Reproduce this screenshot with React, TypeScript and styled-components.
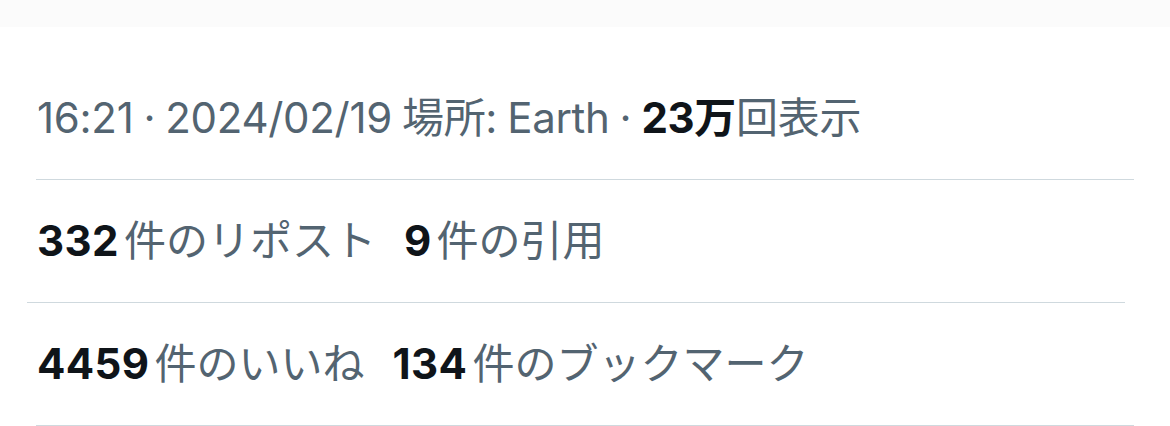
import React from 'react'
import styled, { createGlobalStyle } from 'styled-components'

const GlobalStyle = createGlobalStyle`
  body {
    margin: 0;
    background: #ffffff;
    font-family: Inter, "Noto Sans CJK JP", sans-serif;
  }
`

const Page = styled.div`
  width: 1170px;
  height: 426px;
  overflow: hidden;
  display: flex;
  flex-direction: column;
`

const TopBand = styled.div`
  height: 27px;
  flex-shrink: 0;
  background: #fbfbfb;
`

const Stats = styled.div`
  display: flex;
  flex-direction: column;
  margin-top: 30px;
`

// middle row's divider sits a few px to the left in the source
const Row = styled.div<{ $shift?: number }>`
  height: 123px;
  flex-shrink: 0;
  box-sizing: border-box;
  width: 1098px;
  display: flex;
  align-items: center;
  margin-left: ${(p) => 36 - (p.$shift ?? 0)}px;
  padding-left: ${(p) => 1 + (p.$shift ?? 0)}px;
  padding-bottom: 7px;
  border-bottom: 1px solid #cfd9de;
  font-size: 42px;
  color: #536471;
  white-space: nowrap;
`

const Meta = styled.span`
  letter-spacing: -0.3px;
  word-spacing: -1.5px;
`

const Stat = styled.span`
  display: inline-flex;
  align-items: baseline;
  margin-right: 28px;
`

const Num = styled.b<{ $tight?: boolean }>`
  color: #0f1419;
  font-weight: 700;
  letter-spacing: ${(p) => (p.$tight ? -0.3 : 0.4)}px;
  margin-right: ${(p) => (p.$tight ? 0 : 5)}px;
`

const Label = styled.span`
  color: #536471;
`

const App = (): JSX.Element => {
  return (
    <Page>
      <GlobalStyle />
      <TopBand />
      <Stats>
        <Row>
          <Meta>
            16:21 · 2024/02/19 場所: Earth · <Num $tight>23万</Num>回表示
          </Meta>
        </Row>
        <Row $shift={9}>
          <Stat>
            <Num>332</Num>
            <Label>件のリポスト</Label>
          </Stat>
          <Stat>
            <Num>9</Num>
            <Label>件の引用</Label>
          </Stat>
        </Row>
        <Row>
          <Stat>
            <Num>4459</Num>
            <Label>件のいいね</Label>
          </Stat>
          <Stat>
            <Num>134</Num>
            <Label>件のブックマーク</Label>
          </Stat>
        </Row>
      </Stats>
    </Page>
  )
}

export default App
